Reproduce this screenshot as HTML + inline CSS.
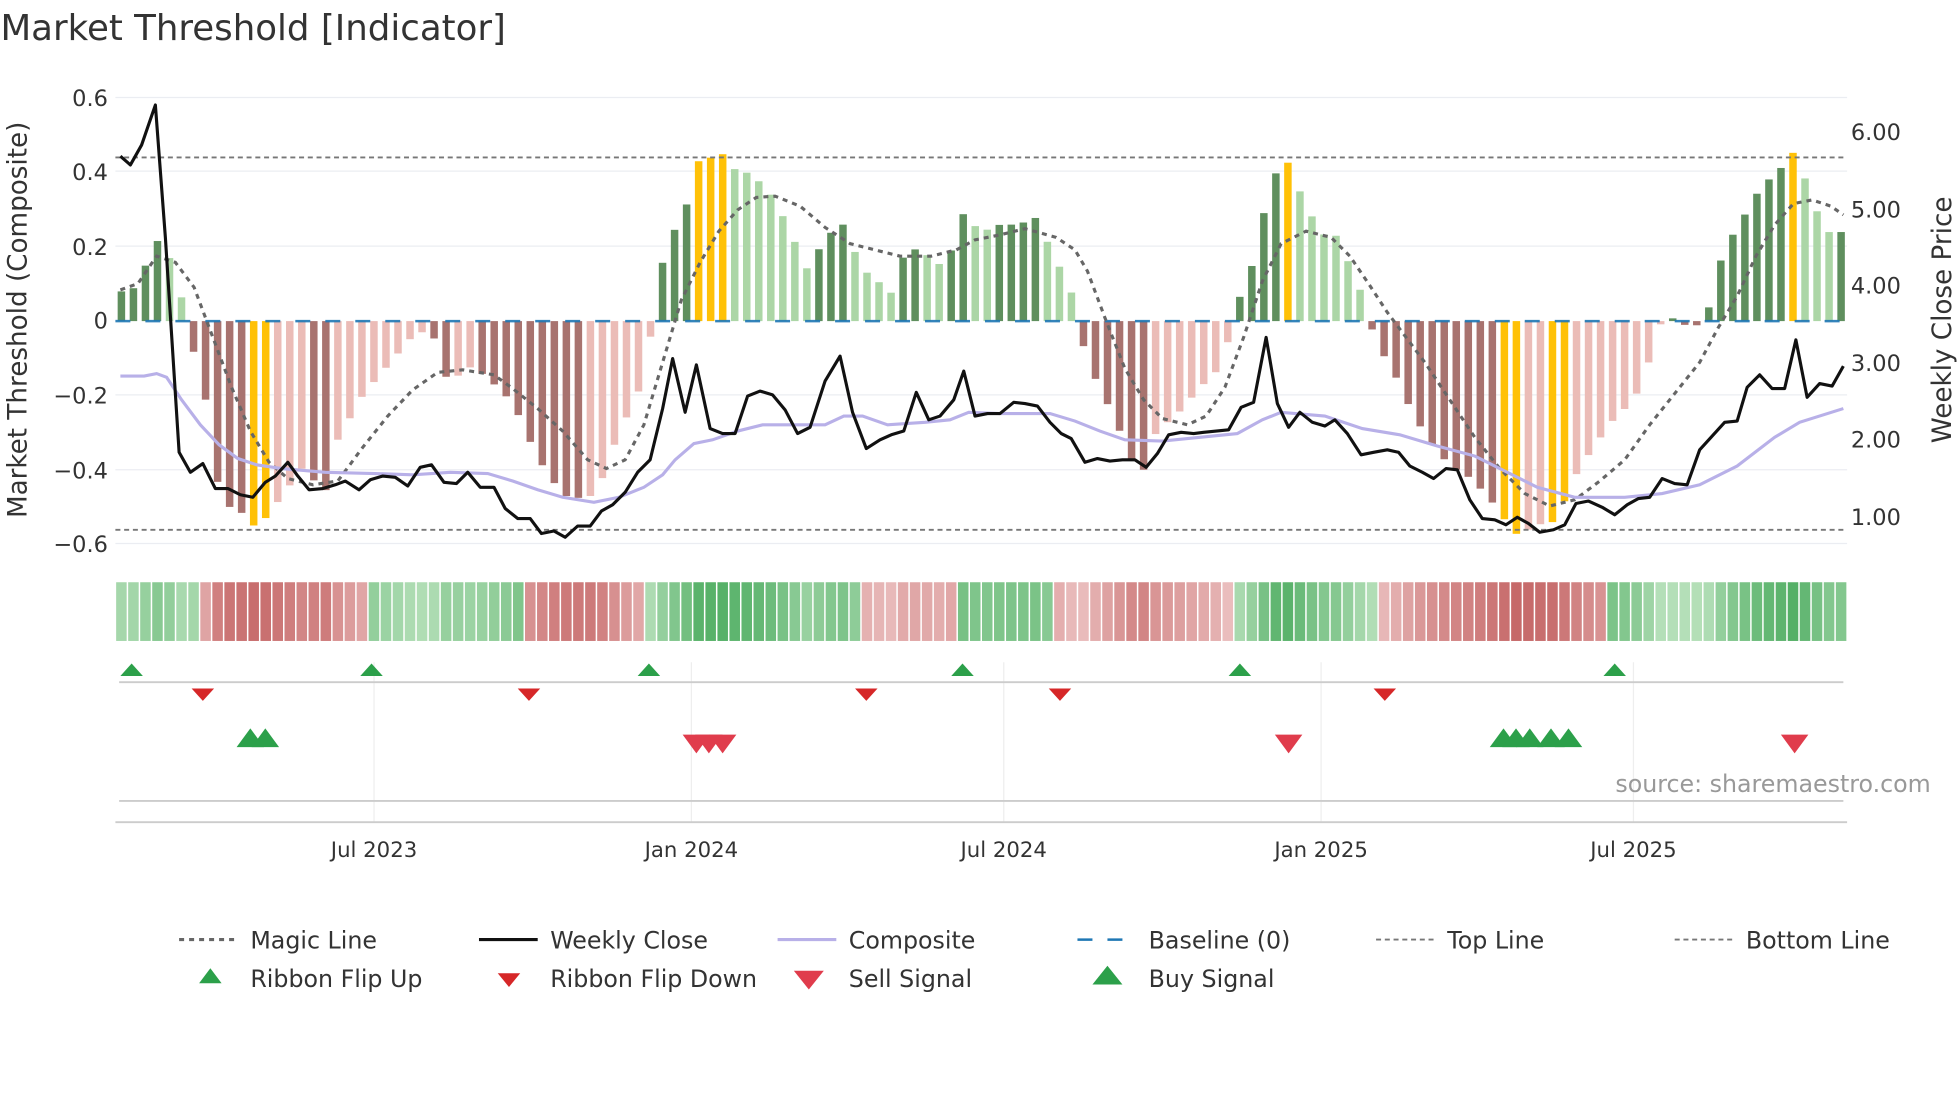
<!DOCTYPE html>
<html><head><meta charset="utf-8"><style>
html,body{margin:0;padding:0;background:#fff;}
svg{display:block;font-family:"DejaVu Sans","Liberation Sans",sans-serif;}
</style></head><body>
<svg id="s" width="1960" height="1102" viewBox="0 0 1568 882" xmlns="http://www.w3.org/2000/svg">
<rect width="1568" height="882" fill="#fff"/>
<text x="0" y="32" font-size="28.5" fill="#333">Market Threshold [Indicator]</text>
<g stroke="#ebedf2" stroke-width="1">
<line x1="92" x2="1478" y1="78" y2="78"/><line x1="92" x2="1478" y1="137" y2="137"/><line x1="92" x2="1478" y1="197" y2="197"/><line x1="92" x2="1478" y1="316" y2="316"/><line x1="92" x2="1478" y1="376" y2="376"/><line x1="92" x2="1478" y1="435" y2="435"/>
</g>
<g font-size="18" fill="#333" text-anchor="end">
<text x="86" y="85">0.6</text><text x="86" y="144">0.4</text><text x="86" y="204">0.2</text><text x="86" y="263">0</text><text x="86" y="323">−0.2</text><text x="86" y="383">−0.4</text><text x="86" y="442">−0.6</text>
</g>
<g font-size="18" fill="#333">
<text x="1481" y="112">6.00</text><text x="1481" y="174">5.00</text><text x="1481" y="235">4.00</text><text x="1481" y="297">3.00</text><text x="1481" y="358">2.00</text><text x="1481" y="420">1.00</text>
</g>
<text transform="translate(21,256) rotate(-90)" font-size="21" fill="#333" text-anchor="middle">Market Threshold (Composite)</text>
<text transform="translate(1561,256) rotate(-90)" font-size="21" fill="#333" text-anchor="middle">Weekly Close Price</text>
<g id="bars"></g>
<line x1="92" x2="1478" y1="257" y2="257" stroke="#1f77b4" stroke-width="2" stroke-dasharray="12,12" opacity="0.9"/>
<line x1="92" x2="1478" y1="126" y2="126" stroke="#777" stroke-width="1.5" stroke-dasharray="4,3"/>
<line x1="92" x2="1478" y1="424" y2="424" stroke="#777" stroke-width="1.5" stroke-dasharray="4,3"/>
<polyline id="magic" fill="none" stroke="#666" stroke-width="2.5" stroke-dasharray="4,4"/>
<polyline id="comp" fill="none" stroke="#b8b0e8" stroke-width="2.5"/>
<polyline id="close" fill="none" stroke="#111" stroke-width="2.5" stroke-linejoin="round"/>
<g id="rib"></g>
<g stroke="#eee" stroke-width="1">
<line x1="299" x2="299" y1="530" y2="658"/><line x1="553" x2="553" y1="530" y2="658"/><line x1="803" x2="803" y1="530" y2="658"/><line x1="1057" x2="1057" y1="530" y2="658"/><line x1="1307" x2="1307" y1="530" y2="658"/>
</g>
<line x1="95" x2="1475" y1="546" y2="546" stroke="#ccc" stroke-width="1.5"/>
<line x1="95" x2="1475" y1="641" y2="641" stroke="#ccc" stroke-width="1.5"/>
<line x1="92" x2="1478" y1="658" y2="658" stroke="#ccc" stroke-width="1.5"/>
<g id="mk"></g>
<text x="1545" y="634" font-size="19" fill="#999" text-anchor="end">source: sharemaestro.com</text>
<g font-size="17" fill="#333" text-anchor="middle">
<text x="299" y="686">Jul 2023</text><text x="553" y="686">Jan 2024</text><text x="803" y="686">Jul 2024</text><text x="1057" y="686">Jan 2025</text><text x="1307" y="686">Jul 2025</text>
</g>
<g font-size="19" fill="#333">
<line x1="143" x2="189" y1="752" y2="752" stroke="#666" stroke-width="2.5" stroke-dasharray="4,4"/><text x="200" y="759">Magic Line</text>
<line x1="383" x2="430" y1="752" y2="752" stroke="#111" stroke-width="2.5"/><text x="440" y="759">Weekly Close</text>
<line x1="622" x2="669" y1="752" y2="752" stroke="#b8b0e8" stroke-width="2.5"/><text x="679" y="759">Composite</text>
<line x1="862" x2="908" y1="752" y2="752" stroke="#1f77b4" stroke-width="2" stroke-dasharray="12,12"/><text x="919" y="759">Baseline (0)</text>
<line x1="1101" x2="1147" y1="752" y2="752" stroke="#777" stroke-width="1.5" stroke-dasharray="4,3"/><text x="1158" y="759">Top Line</text>
<line x1="1340" x2="1386" y1="752" y2="752" stroke="#777" stroke-width="1.5" stroke-dasharray="4,3"/><text x="1397" y="759">Bottom Line</text>
<polygon points="168,775 159,787 177,787" fill="#2ca04a"/><text x="200" y="790">Ribbon Flip Up</text>
<polygon points="398,779 416,779 407,790" fill="#d62728"/><text x="440" y="790">Ribbon Flip Down</text>
<polygon points="635,777 659,777 647,792" fill="#e03c4c"/><text x="679" y="790">Sell Signal</text>
<polygon points="886,773 874,788 898,788" fill="#2ca04a"/><text x="919" y="790">Buy Signal</text>
</g>
</svg>
<script>
var NS="http://www.w3.org/2000/svg";
function el(p,t,a){var e=document.createElementNS(NS,t);for(var k in a)e.setAttribute(k,a[k]);p.appendChild(e);return e;}
var K=[[92,0.08],[105,0.08],[115,0.14],[124,0.22],[132,0.2],[143,0.1],[150,-0.03],[163,-0.18],[172,-0.42],[183,-0.5],[195,-0.52],[205,-0.56],[215,-0.52],[230,-0.45],[245,-0.38],[258,-0.49],[270,-0.32],[290,-0.2],[310,-0.12],[330,-0.04],[345,-0.02],[355,-0.15],[365,-0.15],[378,-0.12],[395,-0.17],[410,-0.22],[430,-0.37],[450,-0.47],[470,-0.48],[480,-0.44],[495,-0.3],[510,-0.2],[520,-0.05],[527,0.13],[540,0.25],[550,0.32],[558,0.43],[578,0.45],[590,0.4],[600,0.4],[615,0.35],[630,0.26],[645,0.14],[660,0.22],[673,0.27],[690,0.14],[705,0.1],[715,0.07],[722,0.17],[735,0.2],[750,0.15],[760,0.18],[770,0.29],[785,0.24],[800,0.26],[815,0.26],[828,0.28],[840,0.2],[857,0.08],[862,0],[866,-0.06],[878,-0.17],[890,-0.25],[900,-0.33],[912,-0.43],[925,-0.3],[945,-0.24],[960,-0.18],[975,-0.13],[985,-0.03],[993,0.08],[1003,0.16],[1013,0.32],[1022,0.41],[1032,0.43],[1040,0.35],[1050,0.28],[1060,0.23],[1070,0.23],[1080,0.15],[1090,0.07],[1095,0],[1105,-0.08],[1120,-0.17],[1130,-0.25],[1145,-0.33],[1160,-0.39],[1175,-0.42],[1190,-0.47],[1205,-0.54],[1215,-0.58],[1228,-0.55],[1245,-0.54],[1260,-0.42],[1275,-0.34],[1290,-0.27],[1305,-0.22],[1318,-0.15],[1322,-0.02],[1340,0.01],[1352,-0.02],[1365,0],[1370,0.08],[1380,0.2],[1390,0.25],[1405,0.34],[1420,0.4],[1428,0.42],[1436,0.46],[1447,0.36],[1460,0.24],[1475,0.24]];
function interp(x){if(x<=K[0][0])return K[0][1];for(var i=1;i<K.length;i++){if(x<=K[i][0]){var a=K[i-1],b=K[i];return a[1]+(b[1]-a[1])*(x-a[0])/(b[0]-a[0]);}}return K[K.length-1][1];}
var Y=[201,211,557,567,578,1031,1204,1214,1242,1252,1436];
var bars=document.getElementById('bars'),rib=document.getElementById('rib');
var n=144,step=(1478-92)/n,prev=0;
var segs=[[92,157,1],[157,293,-1],[293,418,1],[418,516,-1],[516,688,1],[688,767,-1],[767,843,1],[843,988,-1],[988,1104,1],[1104,1287,-1],[1287,1479,1]];
for(var i=0;i<n;i++){
 var cx=92+step*(i+0.5),v=interp(cx),h=Math.abs(v)*297;
 var c,yel=false;
 for(var q=0;q<Y.length;q++)if(Math.abs(Y[q]-cx)<step/2)yel=true;
 if(yel)c='#ffc107';
 else if(v>=0)c=(v>=prev?'#5f8f5e':'#acd6a6');
 else c=(v<=prev?'#a8736f':'#ebbcb7');
 prev=v;
 el(bars,'rect',{x:cx-3,y:v>=0?257-h:257,width:6,height:Math.max(h,1),fill:c});
 var sg=1;for(var j=0;j<segs.length;j++)if(cx>=segs[j][0]&&cx<segs[j][1])sg=segs[j][2];
 var t=Math.min(1,0.15+Math.abs(v)*1.4);
 var col;
 if(sg>0){var r=Math.round(205-(205-52)*t),g=Math.round(235-(235-160)*t),b=Math.round(205-(205-75)*t);col='rgb('+r+','+g+','+b+')';}
 else{var r=Math.round(245-(245-196)*t),g=Math.round(215-(215-100)*t),b=Math.round(215-(215-100)*t);col='rgb('+r+','+g+','+b+')';}
 el(rib,'rect',{x:92+step*i+0.6,y:466,width:step-1.2,height:47,fill:col});
}
document.getElementById('close').setAttribute('points',"96,125 104,132 113,116 124,84 132,190 143,362 152,378 162,371 172,391 182,391 192,396 202,398 212,386 220,381 230,370 238,381 247,392 258,391 268,388 276,385 287,392 296,384 306,381 316,382 326,389 336,374 345,372 355,386 365,387 374,378 384,390 395,390 404,407 414,415 424,415 433,427 443,425 452,430 462,421 472,421 481,409 490,404 500,394 510,378 520,368 530,327 538,287 548,330 557,292 568,343 578,347 588,347 598,317 608,313 618,316 628,328 638,347 648,342 660,305 672,285 682,330 693,359 704,352 713,348 723,345 733,314 743,336 752,333 763,320 771,297 780,333 790,331 800,331 811,322 820,323 830,325 840,338 849,347 857,351 868,370 878,367 888,369 898,368 908,368 917,374 926,363 935,348 945,346 955,347 963,346 973,345 983,344 993,326 1003,322 1013,270 1022,323 1031,342 1040,330 1050,338 1060,341 1068,336 1078,347 1089,364 1099,362 1110,360 1119,362 1128,373 1138,378 1147,383 1157,375 1166,376 1176,400 1186,415 1196,416 1205,420 1214,414 1223,419 1232,426 1243,424 1252,420 1261,403 1271,401 1282,406 1292,412 1302,404 1311,399 1320,398 1330,383 1340,387 1350,388 1360,360 1370,349 1380,338 1390,337 1398,310 1408,300 1418,311 1428,311 1437,272 1446,318 1456,307 1466,309 1475,293");
document.getElementById('comp').setAttribute('points',"96,301 115,301 125,299 133,302 145,320 160,340 175,356 190,367 205,372 225,375 260,378 300,379 330,380 360,378 390,379 410,385 430,392 450,398 475,402 495,398 515,390 530,380 540,368 555,355 570,352 590,345 610,340 630,340 660,340 675,333 690,333 710,340 740,338 760,336 775,330 800,331 840,331 860,337 880,345 900,352 930,353 960,350 990,347 1010,336 1025,330 1060,333 1090,343 1120,348 1150,357 1180,365 1210,380 1230,390 1260,398 1300,398 1330,395 1360,388 1390,373 1420,350 1440,338 1475,327");
document.getElementById('magic').setAttribute('points',"96,232 110,227 125,205 140,210 155,230 170,270 185,310 200,345 215,370 230,383 250,388 270,385 290,358 310,333 330,312 350,298 370,296 395,300 410,311 430,327 450,345 470,368 485,375 500,368 515,340 530,290 545,240 560,210 575,185 590,168 605,158 620,157 640,165 660,182 680,195 700,200 720,205 745,205 765,200 780,192 800,188 820,183 845,190 860,200 870,217 885,257 900,295 915,320 930,335 950,340 965,333 980,310 995,270 1010,225 1025,195 1045,185 1065,190 1080,205 1095,227 1110,250 1125,270 1140,290 1160,320 1180,350 1200,375 1220,395 1240,405 1260,400 1280,385 1300,368 1320,340 1340,315 1360,290 1375,262 1390,237 1405,205 1420,180 1435,163 1450,160 1465,165 1475,172");
var mk=document.getElementById('mk');
[105,297,519,770,992,1292].forEach(function(x){el(mk,'polygon',{points:(x)+',531 '+(x-9)+',541 '+(x+9)+',541',fill:'#2ca04a'});});
[162,423,693,848,1108].forEach(function(x){el(mk,'polygon',{points:(x-9)+',551 '+(x+9)+',551 '+x+',561',fill:'#d62728'});});
[200,212,1203,1213,1224,1241,1255].forEach(function(x){el(mk,'polygon',{points:x+',583 '+(x-11)+',598 '+(x+11)+',598',fill:'#2ca04a'});});
[557,567,578,1031,1436].forEach(function(x){el(mk,'polygon',{points:(x-11)+',588 '+(x+11)+',588 '+x+',603',fill:'#e03c4c'});});
</script>
</body></html>
